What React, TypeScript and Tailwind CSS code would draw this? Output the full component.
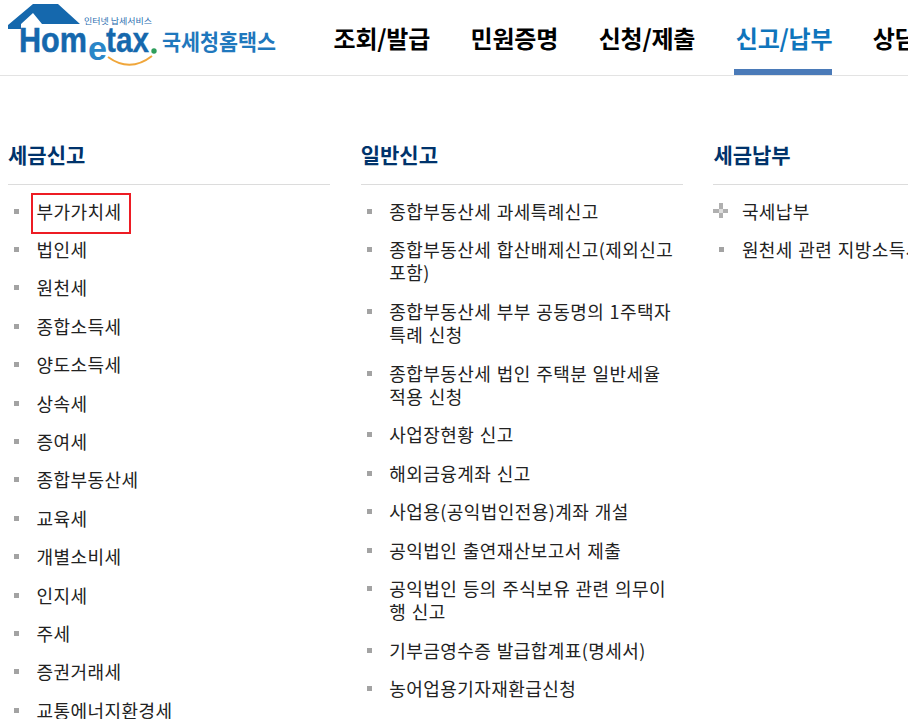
const menus = ["조회/발급", "민원증명", "신청/제출", "신고/납부", "상담/불복·고충"];

type Item = { label: string; plus?: boolean; boxed?: boolean };

const columns: { title: string; items: Item[] }[] = [
  {
    title: "세금신고",
    items: [
      { label: "부가가치세", boxed: true },
      { label: "법인세" },
      { label: "원천세" },
      { label: "종합소득세" },
      { label: "양도소득세" },
      { label: "상속세" },
      { label: "증여세" },
      { label: "종합부동산세" },
      { label: "교육세" },
      { label: "개별소비세" },
      { label: "인지세" },
      { label: "주세" },
      { label: "증권거래세" },
      { label: "교통에너지환경세" },
    ],
  },
  {
    title: "일반신고",
    items: [
      { label: "종합부동산세 과세특례신고" },
      { label: "종합부동산세 합산배제신고(제외신고 포함)" },
      { label: "종합부동산세 부부 공동명의 1주택자 특례 신청" },
      { label: "종합부동산세 법인 주택분 일반세율 적용 신청" },
      { label: "사업장현황 신고" },
      { label: "해외금융계좌 신고" },
      { label: "사업용(공익법인전용)계좌 개설" },
      { label: "공익법인 출연재산보고서 제출" },
      { label: "공익법인 등의 주식보유 관련 의무이행 신고" },
      { label: "기부금영수증 발급합계표(명세서)" },
      { label: "농어업용기자재환급신청" },
    ],
  },
  {
    title: "세금납부",
    items: [{ label: "국세납부", plus: true }, { label: "원천세 관련 지방소득세" }],
  },
];

function Logo() {
  return (
    <svg width="290" height="75" viewBox="0 0 290 75" className="shrink-0">
      <path d="M8 25 L33 4 H58 L80 24 H42 L33 13 L21 24 V29 H8 Z" fill="#1568ad" />
      <text x="84" y="24" fontSize="8" fill="#2a6db0" fontFamily="'Noto Sans CJK KR'" textLength="68" lengthAdjust="spacingAndGlyphs">인터넷 납세서비스</text>
      <text x="19" y="52" fontSize="35" fontWeight="700" fill="#1568ad" stroke="#1568ad" strokeWidth="0.5" fontFamily="'Liberation Sans'" textLength="68" lengthAdjust="spacingAndGlyphs">Hom</text>
      <text x="88" y="60" fontSize="34" fontWeight="700" fill="#2a86c8" fontFamily="'Liberation Sans'" textLength="19" lengthAdjust="spacingAndGlyphs">e</text>
      <text x="106" y="52" fontSize="35" fontWeight="700" fill="#1568ad" stroke="#1568ad" strokeWidth="0.3" fontFamily="'Liberation Sans'" textLength="43" lengthAdjust="spacingAndGlyphs">tax</text>
      <circle cx="154" cy="51" r="2.7" fill="#2e9e5b" />
      <path d="M108 57 Q130 73 152 56" fill="none" stroke="#f0a63a" strokeWidth="2" />
      <text x="162" y="50" fontSize="22" fontWeight="700" fill="#1f78bd" fontFamily="'Noto Sans CJK KR'" textLength="114" lengthAdjust="spacingAndGlyphs">국세청홈택스</text>
    </svg>
  );
}

export default function App() {
  return (
    <div className="w-[908px] h-[719px] overflow-hidden bg-white font-['Noto_Sans_CJK_KR',sans-serif]">
      <header className="flex h-[76px] border-b border-[#e3e3e3]">
        <Logo />
        <nav className="flex ml-[41.5px] gap-[38.5px]">
          {menus.map((m) => (
            <a
              key={m}
              className={
                "flex shrink-0 h-[75px] items-center pt-[6px] pl-[2px] text-[24px] font-bold whitespace-nowrap tracking-[-0.2px] border-b-[6px] " +
                (m === "신고/납부" ? "text-[#0f75bc] border-[#4a7ab8]" : "text-black border-transparent")
              }
            >
              {m}
            </a>
          ))}
        </nav>
      </header>
      <main className="flex gap-[30.7px] pl-[8px] pt-[60px]">
        {columns.map((col) => (
          <section key={col.title} className="w-[322px] shrink-0">
            <h2 className="h-[49px] border-b border-[#dcdcdc] text-[21px] leading-[36px] font-bold text-[#00336b]">
              {col.title}
            </h2>
            <ul className="pt-[7px]">
              {col.items.map((it) => (
                <li key={it.label} className="flex py-[7.5px] text-[18px] leading-[23.4px] tracking-[0.44px] [word-spacing:1px] text-[#222]">
                  {it.plus ? (
                    <span className="w-[28.5px] shrink-0 relative h-[23px]">
                      <span className="absolute left-0 top-[9px] w-[15px] h-[4px] bg-[#b0b0b0]" />
                      <span className="absolute left-[5.5px] top-[3px] w-[4px] h-[15px] bg-[#b0b0b0]" />
                      <span className="absolute left-[5.5px] top-[9px] w-[4px] h-[4px] bg-[#dedede]" />
                    </span>
                  ) : (
                    <span className="w-[28.5px] shrink-0 pl-[6px] pt-[9px]">
                      <span className="block w-[5px] h-[5px] bg-[#a3a3a3]" />
                    </span>
                  )}
                  {it.boxed ? (
                    <span className="relative">
                      {it.label}
                      <span className="absolute -left-[6px] -right-[9px] -top-[7px] -bottom-[11px] border-2 border-[#ed1c24]" />
                    </span>
                  ) : (
                    <span className="pr-[5px]">{it.label}</span>
                  )}
                </li>
              ))}
            </ul>
          </section>
        ))}
      </main>
    </div>
  );
}
